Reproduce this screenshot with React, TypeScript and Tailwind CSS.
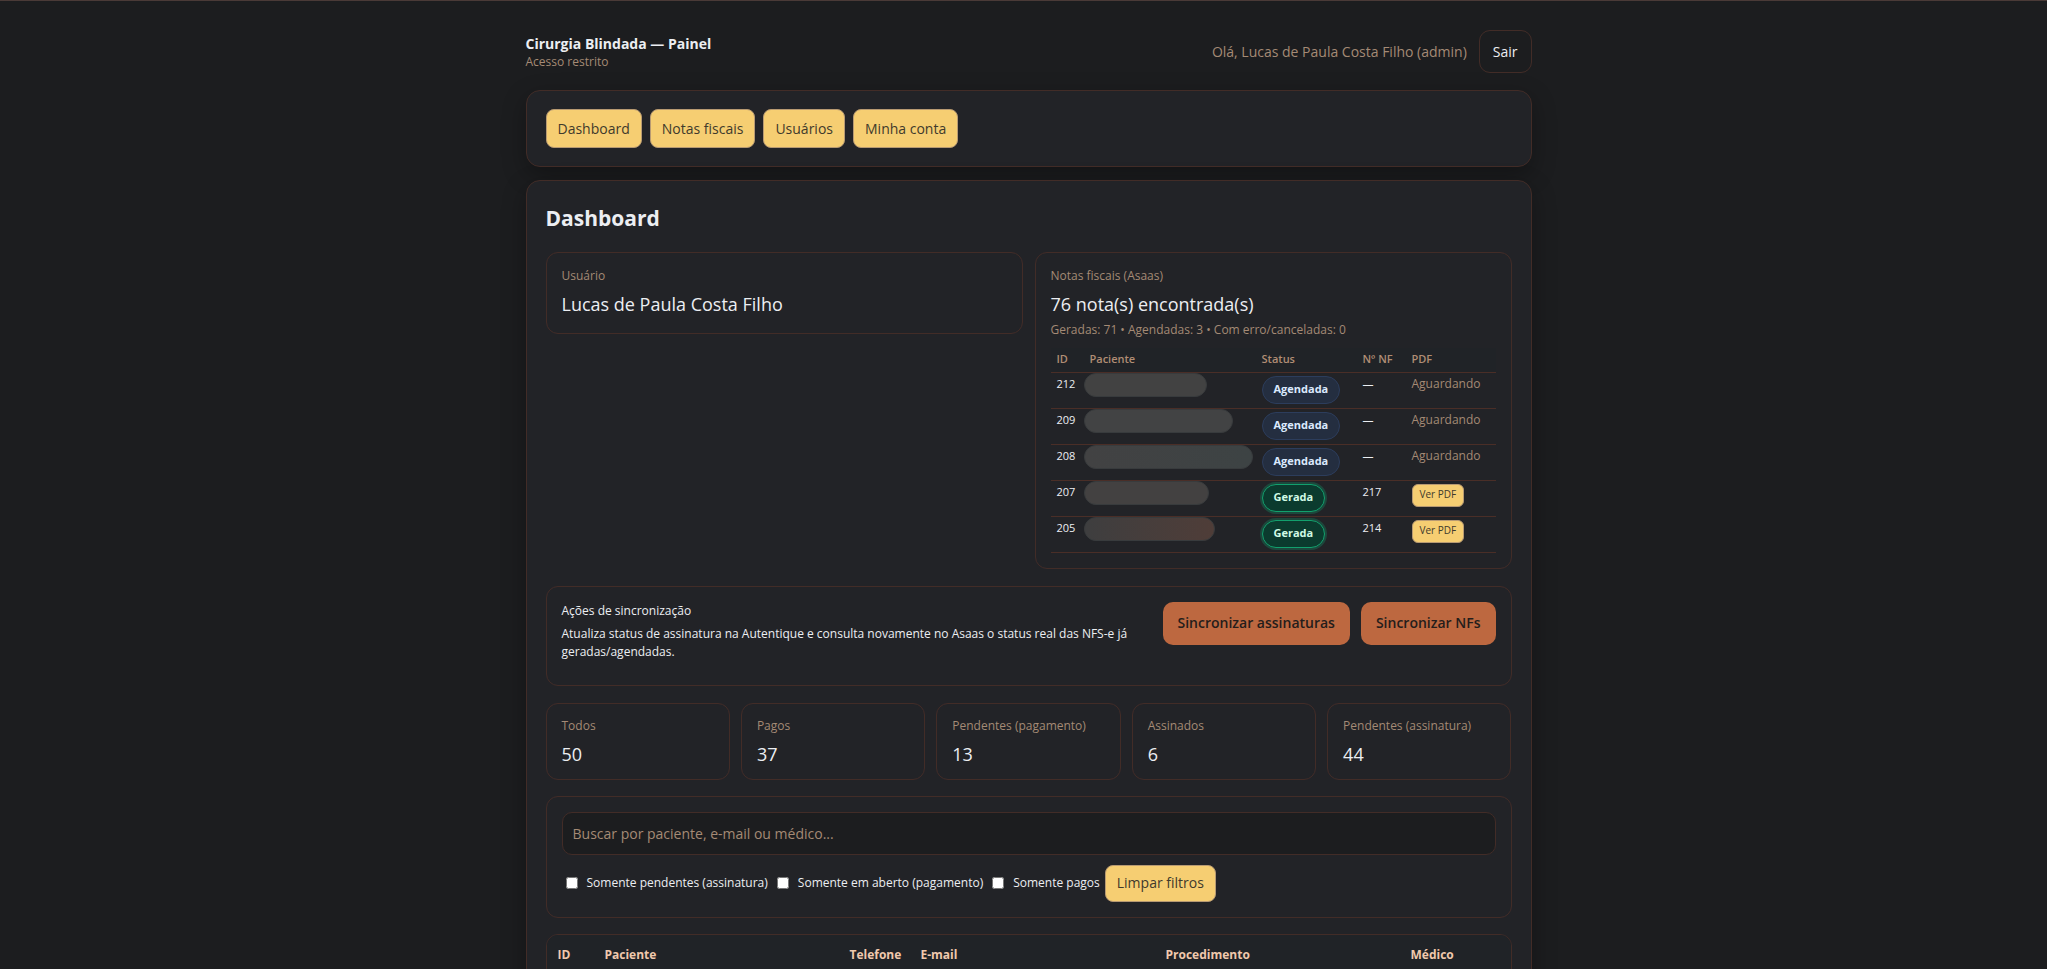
import type { ReactNode } from 'react'
import clsx from 'clsx'

const NAV = ['Dashboard', 'Notas fiscais', 'Usuários', 'Minha conta']

type Nota = {
  id: number
  status: 'Agendada' | 'Gerada'
  numero?: number
  mask: string
}

const NOTAS: Nota[] = [
  { id: 212, status: 'Agendada', mask: 'w-[123px] bg-[#424242]' },
  { id: 209, status: 'Agendada', mask: 'w-[149px] bg-[#424344]' },
  { id: 208, status: 'Agendada', mask: 'w-[169px] bg-linear-to-r from-[#424243] to-[#3d4344]' },
  { id: 207, status: 'Gerada', numero: 217, mask: 'w-[125px] bg-[#434141]' },
  { id: 205, status: 'Gerada', numero: 214, mask: 'w-[131px] bg-linear-to-r from-[#3e3e3f] to-[#4f3d38]' },
]

const STATS = [
  { label: 'Todos', value: 50 },
  { label: 'Pagos', value: 37 },
  { label: 'Pendentes (pagamento)', value: 13 },
  { label: 'Assinados', value: 6 },
  { label: 'Pendentes (assinatura)', value: 44 },
]

const FILTERS = ['Somente pendentes (assinatura)', 'Somente em aberto (pagamento)', 'Somente pagos']

function Card({ className, children }: { className?: string; children: ReactNode }) {
  return (
    <section
      className={clsx(
        'rounded-[14px] border border-[#422c27] bg-[#222327] px-[19px] shadow-[0_8px_24px_rgba(0,0,0,0.3)]',
        className,
      )}
    >
      {children}
    </section>
  )
}

function Panel({ className, children }: { className?: string; children: ReactNode }) {
  return <div className={clsx('rounded-xl border border-[#422c27]', className)}>{children}</div>
}

function Stat({ label, value }: { label: string; value: ReactNode }) {
  return (
    <>
      <p className="text-xs leading-4 text-[#a48a75]">{label}</p>
      <p className="mt-2 text-lg leading-6">{value}</p>
    </>
  )
}

function StatusPill({ status }: { status: Nota['status'] }) {
  return (
    <span
      className={clsx(
        'inline-flex h-7 items-center rounded-full border px-[11px] text-[11px] font-bold',
        status === 'Gerada'
          ? 'border-[#12a06d] bg-[#0b3b2e] text-[#d1fae5] shadow-[0_0_0_2px_rgba(16,160,109,0.3)]'
          : 'border-[#2c3d5c] bg-[#242e40] text-[#dbeafe]',
      )}
    >
      {status}
    </span>
  )
}

export default function App() {
  return (
    <div className="min-h-screen border-t border-[#4a3a37] bg-[#1c1d1f] pl-2.5 font-['Open_Sans',sans-serif] text-sm text-[#eceef2]">
      <div className="mx-auto max-w-[1006px] pt-[29px]">
        <header className="flex items-center justify-between">
          <div>
            <h1 className="leading-5 font-bold">Cirurgia Blindada — Painel</h1>
            <p className="text-xs leading-4 text-[#a48a75]">Acesso restrito</p>
          </div>
          <div className="flex items-center gap-3">
            <span className="text-[#a48a75]">Olá, Lucas de Paula Costa Filho (admin)</span>
            <button className="h-[43px] rounded-[11px] border border-[#422c27] px-[13px]">Sair</button>
          </div>
        </header>

        <Card className="mt-[17px] py-[18px]">
          <nav className="flex gap-2">
            {NAV.map((item) => (
              <a
                key={item}
                href="#"
                className="flex h-[39px] items-center rounded-lg border border-[#b89a72] bg-[#f6ce72] px-[11px] text-[#3f3a2c]"
              >
                {item}
              </a>
            ))}
          </nav>
        </Card>

        <Card className="mt-[13px] pt-[21px] pb-5">
          <h2 className="text-[21px] leading-8 font-bold">Dashboard</h2>

          <div className="mt-[18px] grid grid-cols-2 items-start gap-3">
            <Panel className="px-[15px] pt-[15px] pb-[17px]">
              <Stat label="Usuário" value="Lucas de Paula Costa Filho" />
            </Panel>
            <Panel className="p-[15px]">
              <Stat label="Notas fiscais (Asaas)" value="76 nota(s) encontrada(s)" />
              <p className="mt-1 text-xs leading-5 text-[#a48a75]">
                Geradas: 71 • Agendadas: 3 • Com erro/canceladas: 0
              </p>
              <table className="mt-2 w-full table-fixed border-collapse text-left text-xs">
                <thead className="text-[11px] text-[#b08d74]">
                  <tr className="h-6 border-b border-[#4a2e27] bg-[#202327]">
                    <th className="w-[33px] pl-1.5 font-semibold">ID</th>
                    <th className="pl-1.5 font-semibold">Paciente</th>
                    <th className="w-[101px] pl-1.5 font-semibold">Status</th>
                    <th className="w-[49px] pl-1.5 font-semibold whitespace-nowrap">Nº NF</th>
                    <th className="w-[90px] pl-1.5 font-semibold">PDF</th>
                  </tr>
                </thead>
                <tbody>
                  {NOTAS.map((nota) => (
                    <tr key={nota.id} className="h-9 border-b border-[#4a2e27] align-top">
                      <td className="pt-1 pl-1.5 text-[11px]">{nota.id}</td>
                      <td>
                        <div className={clsx('h-6 rounded-full border border-[#383b3d]', nota.mask)} />
                      </td>
                      <td className="pt-[3px] pl-1.5">
                        <StatusPill status={nota.status} />
                      </td>
                      <td className="pt-1 pl-1.5 text-[11px]">{nota.numero ?? '—'}</td>
                      <td className="pt-[3px] pl-1.5">
                        {nota.numero ? (
                          <button className="h-[23px] rounded-md border border-[#b89a72] bg-[#f6ce72] px-[7px] text-[10px] text-[#3f3a2c]">
                            Ver PDF
                          </button>
                        ) : (
                          <span className="text-[#a48a75]">Aguardando</span>
                        )}
                      </td>
                    </tr>
                  ))}
                </tbody>
              </table>
            </Panel>
          </div>

          <Panel className="mt-[17px] flex items-start justify-between px-[15px] pt-[15px] pb-6">
            <div className="max-w-[570px] text-xs">
              <p className="leading-[18px]">Ações de sincronização</p>
              <p className="mt-[5px] leading-[18px]">
                Atualiza status de assinatura na Autentique e consulta novamente no Asaas o status real das NFS-e já
                geradas/agendadas.
              </p>
            </div>
            <div className="flex gap-[11px] font-semibold text-[#251d1b]">
              <button className="h-[43px] rounded-[10px] bg-[#bd6840] px-[15px]">Sincronizar assinaturas</button>
              <button className="h-[43px] rounded-[10px] bg-[#bd6840] px-[15px]">Sincronizar NFs</button>
            </div>
          </Panel>

          <div className="mt-[17px] grid grid-cols-5 gap-[11px]">
            {STATS.map((stat) => (
              <Panel key={stat.label} className="px-[15px] pt-3.5 pb-[13px]">
                <Stat label={stat.label} value={stat.value} />
              </Panel>
            ))}
          </div>

          <Panel className="mt-4 p-[15px]">
            <input
              type="text"
              aria-label="Buscar"
              placeholder="Buscar por paciente, e-mail ou médico..."
              className="block h-[43px] w-full rounded-[10px] border border-[#422c27] bg-[#1c1d1f] px-2.5 placeholder:text-[#a48a75]"
            />
            <div className="mt-2.5 flex items-center gap-[5px] text-xs">
              {FILTERS.map((filter) => (
                <label key={filter} className="flex items-center gap-[9px] pl-1">
                  <input type="checkbox" className="size-3" />
                  {filter}
                </label>
              ))}
              <button className="h-[37px] rounded-lg border border-[#b89a72] bg-[#f6ce72] px-[11px] text-sm text-[#3f3a2c]">
                Limpar filtros
              </button>
            </div>
          </Panel>

          <Panel className="mt-4 min-h-40 overflow-hidden">
            <table className="w-full table-fixed border-collapse text-left text-xs">
              <thead className="bg-[#202327] text-[#f0c9ad]">
                <tr className="h-10">
                  <th className="w-[47px] pl-[11px]">ID</th>
                  <th className="w-[245px] pl-[11px]">Paciente</th>
                  <th className="w-[71px] pl-[11px]">Telefone</th>
                  <th className="w-[245px] pl-[11px]">E-mail</th>
                  <th className="w-[245px] pl-[11px]">Procedimento</th>
                  <th className="pl-[11px]">Médico</th>
                </tr>
              </thead>
            </table>
          </Panel>
        </Card>
      </div>
    </div>
  )
}
